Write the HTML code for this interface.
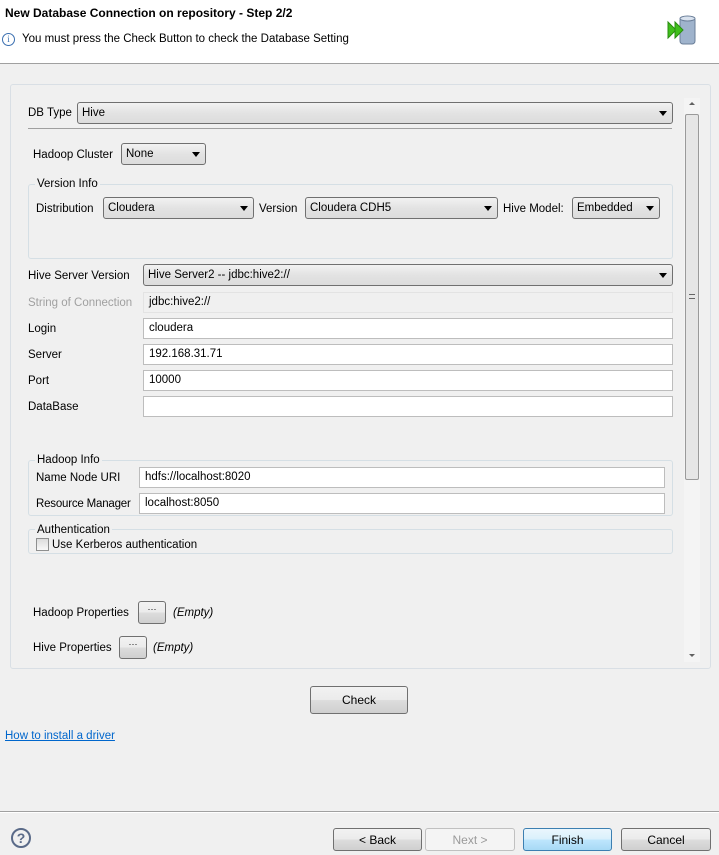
<!DOCTYPE html>
<html><head><meta charset="utf-8"><style>
*{box-sizing:border-box;margin:0;padding:0}
body{width:719px;height:855px;background:#f0f0f0;font-family:"Liberation Sans",sans-serif;font-size:11.5px;line-height:15px;color:#000;position:relative;overflow:hidden}
.a{position:absolute;white-space:nowrap}
.hdr{left:0;top:0;width:719px;height:64px;background:#fff;border-bottom:1px solid #a0a0a0}
.combo{position:absolute;height:22px;border:1px solid #707070;border-radius:3px;background:linear-gradient(#f2f2f2,#e3e3e3 50%,#dcdcdc);padding:3px 4px;white-space:nowrap}
.combo:after{content:"";position:absolute;right:5px;top:8px;border-left:4px solid transparent;border-right:4px solid transparent;border-top:5px solid #000}
.tx{position:absolute;height:21px;border:1px solid #bdbdbd;background:#fff;padding:2px 5px;white-space:nowrap}
.grp{position:absolute;border:1px solid #d5dfe5;border-radius:3px}
.gl{position:absolute;background:#f0f0f0;padding:0 2px;white-space:nowrap}
.btn{position:absolute;border:1px solid #707070;border-radius:3px;background:linear-gradient(#f2f2f2,#ebebeb 50%,#dddddd 51%,#cfcfcf);text-align:center;height:24px;line-height:22px;font-size:12px}
</style></head><body>
<div class="a hdr"></div>
<div class="a" style="left:5px;top:6px;font-weight:bold;font-size:12px">New Database Connection on repository - Step 2/2</div>
<div class="a" style="left:2px;top:33px;width:13px;height:13px;border:1px solid #3a6fb0;border-radius:50%;font-size:9px;color:#3a6fb0;text-align:center;line-height:11px;font-family:'Liberation Serif',serif">i</div>
<div class="a" style="left:22px;top:32px">You must press the Check Button to check the Database Setting</div>
<svg class="a" style="left:664px;top:14px" width="42" height="32"><rect x="16" y="3" width="15" height="27" rx="3" fill="#9fb3cc" stroke="#6b7f99"/><ellipse cx="23.5" cy="4.5" rx="7.5" ry="2.5" fill="#d9e2ee" stroke="#6b7f99"/><path d="M4 8 L12 16 L4 24 Z" fill="#3fbf1a" stroke="#2a8c10"/><path d="M11 8 L19 16 L11 24 Z" fill="#3fbf1a" stroke="#2a8c10"/></svg>

<div class="a" style="left:10px;top:84px;width:701px;height:585px;border:1px solid #d9dfe5;border-radius:3px"></div>
<div class="a" style="left:684px;top:98px;width:16px;height:564px;background:#f4f4f4"></div>
<div class="a" style="left:689px;top:102px;border-left:3px solid transparent;border-right:3px solid transparent;border-bottom:3px solid #606060"></div>
<div class="a" style="left:685px;top:114px;width:14px;height:366px;border:1px solid #9a9a9a;border-radius:2px;background:#e6e6e6"></div>
<div class="a" style="left:689px;top:294px;width:6px;border-top:1px solid #666;border-bottom:1px solid #666;height:5px"></div>
<div class="a" style="left:689px;top:654px;border-left:3px solid transparent;border-right:3px solid transparent;border-top:3px solid #606060"></div>

<div class="a" style="left:28px;top:106px">DB Type</div>
<div class="combo" style="left:77px;top:102px;width:596px">Hive</div>
<div class="a" style="left:28px;top:128px;width:644px;height:1px;background:#a0a0a0"></div>

<div class="a" style="left:33px;top:148px">Hadoop Cluster</div>
<div class="combo" style="left:121px;top:143px;width:85px">None</div>

<div class="grp" style="left:28px;top:184px;width:645px;height:75px"></div>
<div class="gl" style="left:35px;top:177px">Version Info</div>
<div class="a" style="left:36px;top:202px">Distribution</div>
<div class="combo" style="left:103px;top:197px;width:151px">Cloudera</div>
<div class="a" style="left:259px;top:202px">Version</div>
<div class="combo" style="left:305px;top:197px;width:193px">Cloudera CDH5</div>
<div class="a" style="left:503px;top:202px">Hive Model:</div>
<div class="combo" style="left:572px;top:197px;width:88px">Embedded</div>

<div class="a" style="left:28px;top:269px">Hive Server Version</div>
<div class="combo" style="left:143px;top:264px;width:530px">Hive Server2 -- jdbc:hive2://</div>
<div class="a" style="left:28px;top:296px;color:#a0a0a0">String of Connection</div>
<div class="tx" style="left:143px;top:292px;width:530px;background:#f0f0f0;border-color:#e3e3e3">jdbc:hive2://</div>
<div class="a" style="left:28px;top:322px">Login</div>
<div class="tx" style="left:143px;top:318px;width:530px">cloudera</div>
<div class="a" style="left:28px;top:348px">Server</div>
<div class="tx" style="left:143px;top:344px;width:530px">192.168.31.71</div>
<div class="a" style="left:28px;top:374px">Port</div>
<div class="tx" style="left:143px;top:370px;width:530px">10000</div>
<div class="a" style="left:28px;top:400px">DataBase</div>
<div class="tx" style="left:143px;top:396px;width:530px"></div>

<div class="grp" style="left:28px;top:460px;width:645px;height:56px"></div>
<div class="gl" style="left:35px;top:453px">Hadoop Info</div>
<div class="a" style="left:36px;top:471px">Name Node URI</div>
<div class="tx" style="left:139px;top:467px;width:526px">hdfs://localhost:8020</div>
<div class="a" style="left:36px;top:497px;letter-spacing:-0.2px">Resource Manager</div>
<div class="tx" style="left:139px;top:493px;width:526px">localhost:8050</div>

<div class="grp" style="left:28px;top:529px;width:645px;height:25px"></div>
<div class="gl" style="left:35px;top:523px">Authentication</div>
<div class="a" style="left:36px;top:538px;width:13px;height:13px;border:1px solid #8e8f8f;background:linear-gradient(#dcdcdc,#f8f8f8)"></div>
<div class="a" style="left:52px;top:538px">Use Kerberos authentication</div>

<div class="a" style="left:33px;top:606px">Hadoop Properties</div>
<div class="btn" style="left:138px;top:601px;width:28px;height:23px;line-height:14px;font-size:9px">···</div>
<div class="a" style="left:173px;top:606px;font-style:italic">(Empty)</div>
<div class="a" style="left:33px;top:641px">Hive Properties</div>
<div class="btn" style="left:119px;top:636px;width:28px;height:23px;line-height:14px;font-size:9px">···</div>
<div class="a" style="left:153px;top:641px;font-style:italic">(Empty)</div>

<div class="btn" style="left:310px;top:686px;width:98px;height:28px;line-height:26px">Check</div>
<div class="a" style="left:5px;top:729px;color:#0066cc;text-decoration:underline">How to install a driver</div>

<div class="a" style="left:0;top:811px;width:719px;height:1px;background:#a0a0a0"></div>
<div class="a" style="left:0;top:812px;width:719px;height:1px;background:#fff"></div>
<div class="a" style="left:11px;top:828px;width:20px;height:20px;border:2px solid #5a6a88;border-radius:50%;color:#5a6a88;font-weight:bold;text-align:center;line-height:16px;font-size:14px">?</div>
<div class="btn" style="left:333px;top:828px;width:89px;height:23px">&lt; Back</div>
<div class="btn" style="left:425px;top:828px;width:90px;height:23px;color:#9a9a9a;border-color:#c0c0c0;background:#f4f4f4">Next &gt;</div>
<div class="btn" style="left:523px;top:828px;width:89px;height:23px;border-color:#3c7fb1;background:linear-gradient(#eaf6fd,#d9f0fc 50%,#bee6fd 51%,#a7d9f5)">Finish</div>
<div class="btn" style="left:621px;top:828px;width:90px;height:23px">Cancel</div>
</body></html>
